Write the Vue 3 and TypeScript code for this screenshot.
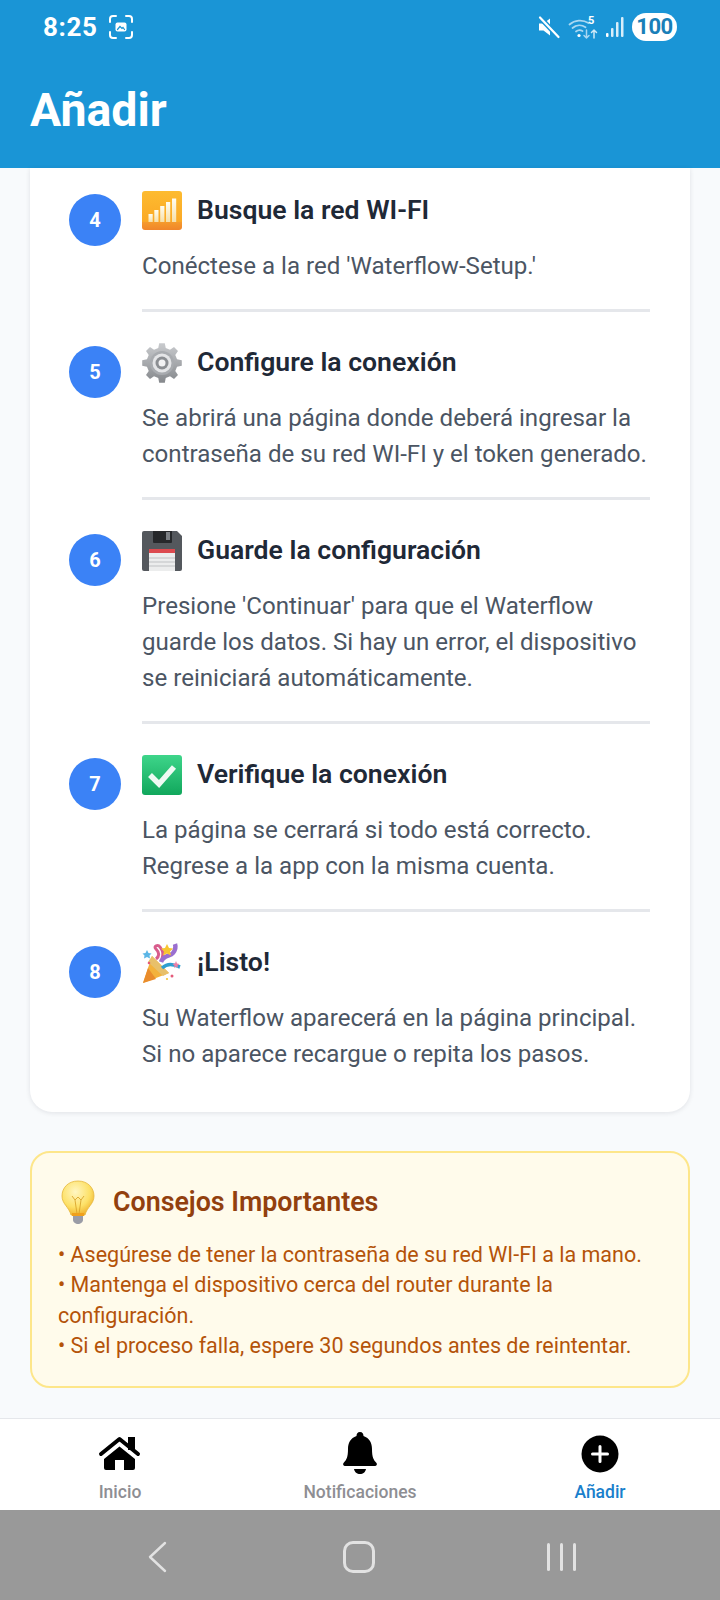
<template>
  <div class="phone">
    <header class="top">
      <div class="status-bar">
        <div class="status-left">
          <span class="clock">8:25</span>
          <svg class="shot-icon" width="26" height="26" viewBox="0 0 26 26" fill="none" stroke="#fff" stroke-width="2" stroke-linecap="round">
            <path d="M2 8V5a3 3 0 0 1 3-3h3M18 2h3a3 3 0 0 1 3 3v3M24 18v3a3 3 0 0 1-3 3h-3M8 24H5a3 3 0 0 1-3-3v-3" />
            <rect x="7.500" y="8.500" width="11" height="9" rx="2" fill="#fff" stroke="none" />
            <path d="M9.500 15.500l2.500-3 2 2 1-1 1.500 2" stroke="#1a95d6" stroke-width="1.200" />
          </svg>
        </div>
        <div class="status-right">
          <svg width="24" height="24" viewBox="0 0 24 24" fill="#fff">
            <path d="M2 8.500h4.500L13 3.500v17l-6.500-5H2z" />
            <path d="M3 2.500l18.500 19.500" stroke="#1a95d6" stroke-width="5" />
            <path d="M3 2.500l18.500 19.500" stroke="#fff" stroke-width="2.200" stroke-linecap="round" />
          </svg>
          <svg width="30" height="28" viewBox="0 0 30 28" fill="none" stroke="#a9d8f2" stroke-width="1.800" stroke-linecap="round">
            <path d="M1.500 11.500a16 16 0 0 1 19-1.500M4.500 15a11 11 0 0 1 13-.8M8 18.500a6 6 0 0 1 6.500-.5" />
            <circle cx="11" cy="22.500" r="1.600" fill="#fff" stroke="none" />
            <path d="M18.500 17v8m-2.500-2.500l2.500 2.500 2.500-2.500" stroke-width="1.500" />
            <path d="M26 25v-8m-2.500 2.500L26 17l2.500 2.500" stroke="#cfe9f8" stroke-width="1.500" />
            <text x="20" y="11" class="wifi-five">5</text>
          </svg>
          <svg width="20" height="24" viewBox="0 0 20 24" fill="#d8eefa">
            <rect x="1" y="18" width="2.500" height="4" rx="1" fill="#fff" />
            <rect x="6" y="13" width="2.500" height="9" rx="1" />
            <rect x="11" y="7" width="2.500" height="15" rx="1" />
            <rect x="16" y="2" width="2.500" height="20" rx="1" />
          </svg>
          <span class="battery">100</span>
        </div>
      </div>
      <h1 class="page-title">Añadir</h1>
    </header>

    <main class="content">
      <section class="steps-card">
        <div v-for="(step, i) in steps" :key="step.num" class="step">
          <div class="step-num">{{ step.num }}</div>
          <div class="step-body">
            <div class="step-head">
              <svg v-if="step.icon === 'signal'" class="emoji" viewBox="0 0 40 40">
                <defs>
                  <linearGradient id="sigBg" x1="0" y1="0" x2="0" y2="1">
                    <stop offset="0" stop-color="#fdbb30" />
                    <stop offset="0.78" stop-color="#fba925" />
                    <stop offset="0.8" stop-color="#f59a2c" />
                    <stop offset="1" stop-color="#f0852a" />
                  </linearGradient>
                  <linearGradient id="sigBar" x1="0" y1="0" x2="0" y2="1">
                    <stop offset="0" stop-color="#fffdf2" />
                    <stop offset="1" stop-color="#f6dfa8" />
                  </linearGradient>
                </defs>
                <rect width="40" height="39" rx="3" fill="url(#sigBg)" />
                <g fill="url(#sigBar)">
                  <rect x="6.500" y="23" width="4.200" height="8" />
                  <rect x="12.300" y="19" width="4.200" height="12" />
                  <rect x="18.200" y="15" width="4.200" height="16" />
                  <rect x="24" y="11" width="4.200" height="20" />
                  <rect x="30" y="7.500" width="4.200" height="23.500" />
                </g>
              </svg>
              <svg v-else-if="step.icon === 'gear'" class="emoji" viewBox="0 0 40 40">
                <defs>
                  <linearGradient id="gearBg" x1="0" y1="0" x2="0" y2="1">
                    <stop offset="0" stop-color="#c9cbce" />
                    <stop offset="1" stop-color="#85888c" />
                  </linearGradient>
                </defs>
                <path :d="gearPath" fill="url(#gearBg)" />
                <circle cx="20" cy="20" r="12" fill="#a8abaf" />
                <circle cx="20" cy="20" r="9.500" fill="#e4e5e7" />
                <circle cx="20" cy="20" r="6.500" fill="#8b8e92" />
                <circle cx="20" cy="20" r="3.500" fill="#f2f2f3" />
              </svg>
              <svg v-else-if="step.icon === 'floppy'" class="emoji" viewBox="0 0 40 40">
                <path d="M2 0h33l5 5v33a2 2 0 0 1-2 2H2a2 2 0 0 1-2-2V2a2 2 0 0 1 2-2z" fill="#54585d" />
                <path d="M11 0h19v11a1 1 0 0 1-1 1H12a1 1 0 0 1-1-1z" fill="#26282b" />
                <rect x="24" y="1" width="4" height="8" fill="#7c8085" />
                <rect x="7" y="18" width="26" height="22" fill="#eceded" />
                <rect x="7" y="18" width="26" height="4" fill="#dc4a4f" />
                <path d="M7 27h26M7 31h26M7 35h26" stroke="#bfc1c3" stroke-width="1" />
              </svg>
              <svg v-else-if="step.icon === 'check'" class="emoji" viewBox="0 0 40 40">
                <defs>
                  <linearGradient id="okBg" x1="0" y1="0" x2="0" y2="1">
                    <stop offset="0" stop-color="#3ed58a" />
                    <stop offset="1" stop-color="#11a75c" />
                  </linearGradient>
                </defs>
                <rect width="40" height="40" rx="3" fill="url(#okBg)" />
                <path d="M8 20l9 9 15-17" fill="none" stroke="#eefaf3" stroke-width="5.500" />
              </svg>
              <svg v-else-if="step.icon === 'party'" class="emoji" viewBox="0 0 40 40">
                <path d="M1 40l9-27 17 17z" fill="#f3b23c" />
                <path d="M1 40l5-15 8 11z" fill="#e98c2c" />
                <path d="M10 13l17 17-6 3-15-14z" fill="#e8c06a" />
                <path d="M14 16c4-3 3-7 0-10s2-5 4-2 4 5 2 12" fill="none" stroke="#d85c8c" stroke-width="3" />
                <path d="M19 19c3-8 9-5 12-9s3-6 2-9" fill="none" stroke="#9a6fd0" stroke-width="4.500" />
                <path d="M20 25c6-5 10-4 18-1" fill="none" stroke="#2f9fd0" stroke-width="3.500" />
                <path d="M25 1l2 4 4 .5-3 3 1 4-4-2-4 2 1-4-3-3 4-.5z" fill="#f7c531" />
                <path d="M5 7l1.500 3 3 .5-2 2 .5 3-3-1.500-3 1.500.5-3-2-2 3-.5z" fill="#5cb6e6" />
                <path d="M34 18l1 2.500 2.500.5-2 1.500.5 2.500-2-1.500-2 1.500.5-2.500-2-1.500 2.500-.5z" fill="#ee7fa6" />
                <circle cx="7" cy="20" r="1.300" fill="#e45a7a" />
                <circle cx="30" cy="33" r="1.500" fill="#e45a7a" />
                <circle cx="25" cy="36" r="1.100" fill="#f7c531" />
              </svg>
              <h3 class="step-title">{{ step.title }}</h3>
            </div>
            <p class="step-desc">
              <template v-for="(line, j) in step.lines" :key="j">
                {{ line }}<br v-if="j < step.lines.length - 1" />
              </template>
            </p>
            <div v-if="i < steps.length - 1" class="divider"></div>
          </div>
        </div>
      </section>

      <section class="tips">
        <div class="tips-head">
          <svg class="emoji bulb" viewBox="0 0 40 44">
            <defs>
              <radialGradient id="bulbBg" cx="0.42" cy="0.32" r="0.75">
                <stop offset="0" stop-color="#fff6c2" />
                <stop offset="0.6" stop-color="#fde168" />
                <stop offset="1" stop-color="#eeaa22" />
              </radialGradient>
            </defs>
            <path d="M20 1C10 1 4 8 4 16c0 8 7 11 9 19h14c2-8 9-11 9-19C36 8 30 1 20 1z" fill="url(#bulbBg)" stroke="#e4b63c" stroke-width=".8" />
            <path d="M14 16l3 4 3-3 3 3 3-4M17 20l2 14M23 20l-2 14" fill="none" stroke="#d9a52c" stroke-width=".9" />
            <rect x="14" y="33" width="12" height="3" fill="#f0a01c" />
            <path d="M15 36h10v4c0 2-2.500 4-5 4s-5-2-5-4z" fill="#9a9ca6" />
          </svg>
          <h3 class="tips-title">Consejos Importantes</h3>
        </div>
        <p class="tips-text">
          • Asegúrese de tener la contraseña de su red WI-FI a la mano.<br />
          • Mantenga el dispositivo cerca del router durante la configuración.<br />
          • Si el proceso falla, espere 30 segundos antes de reintentar.
        </p>
      </section>
    </main>

    <nav class="tabbar">
      <div v-for="tab in tabs" :key="tab.label" class="tab" :class="{ active: tab.active }">
        <svg v-if="tab.label === 'Inicio'" width="44" height="44" viewBox="0 0 44 44">
          <path d="M30 5h7v13h-7z" fill="#000" />
          <path d="M3 22L21.500 7 40 22" fill="none" stroke="#000" stroke-width="4" stroke-linecap="round" stroke-linejoin="round" />
          <path d="M21.500 14.500L37 27v9a2 2 0 0 1-2 2h-9V28h-9v10H8a2 2 0 0 1-2-2v-9z" fill="#000" />
        </svg>
        <svg v-else-if="tab.label === 'Notificaciones'" width="44" height="44" viewBox="0 0 44 44">
          <path d="M22 0c2.500 0 3.500 2 3.500 4 6 2 8.500 7 8.500 13 0 8 1.500 11 4.500 14 1 1.500 0 3-1.500 3H7c-1.500 0-2.500-1.500-1.500-3 3-3 4.500-6 4.500-14 0-6 2.500-11 8.500-13C18.500 2 19.500 0 22 0z" fill="#000" />
          <path d="M16 37h12c-.5 3-3 5-6 5s-5.500-2-6-5z" fill="#000" />
        </svg>
        <svg v-else width="44" height="44" viewBox="0 0 44 44">
          <circle cx="22" cy="22" r="18.500" fill="#000" />
          <path d="M22 14.500v15M14.500 22h15" stroke="#fff" stroke-width="3" stroke-linecap="round" />
        </svg>
        <span class="tab-label">{{ tab.label }}</span>
      </div>
    </nav>

    <div class="sys-nav">
      <svg width="24" height="34" viewBox="0 0 24 34" fill="none" stroke="#e2e2e2" stroke-width="2.400" stroke-linecap="round" stroke-linejoin="round">
        <path d="M20 3L5 17l15 14" />
      </svg>
      <div class="sys-home"></div>
      <div class="sys-recent"><i></i><i></i><i></i></div>
    </div>
  </div>
</template>

<script setup lang="ts">
type Step = { num: number; icon: string; title: string; lines: string[] }

const steps: Step[] = [
  { num: 4, icon: 'signal', title: 'Busque la red WI-FI', lines: ["Conéctese a la red 'Waterflow-Setup.'"] },
  {
    num: 5,
    icon: 'gear',
    title: 'Configure la conexión',
    lines: ['Se abrirá una página donde deberá ingresar la', 'contraseña de su red WI-FI y el token generado.'],
  },
  {
    num: 6,
    icon: 'floppy',
    title: 'Guarde la configuración',
    lines: ["Presione 'Continuar' para que el Waterflow", 'guarde los datos. Si hay un error, el dispositivo', 'se reiniciará automáticamente.'],
  },
  {
    num: 7,
    icon: 'check',
    title: 'Verifique la conexión',
    lines: ['La página se cerrará si todo está correcto.', 'Regrese a la app con la misma cuenta.'],
  },
  {
    num: 8,
    icon: 'party',
    title: '¡Listo!',
    lines: ['Su Waterflow aparecerá en la página principal.', 'Si no aparece recargue o repita los pasos.'],
  },
]

const tabs = [
  { label: 'Inicio', active: false },
  { label: 'Notificaciones', active: false },
  { label: 'Añadir', active: true },
]

// 8 toothed gear outline, same shape as the emoji
const gearPath = (() => {
  const teeth = 8
  const pts: string[] = []
  for (let i = 0; i < teeth; i++) {
    const a = (i / teeth) * Math.PI * 2 - Math.PI / 2
    const w = Math.PI / teeth
    const spots: [number, number][] = [
      [15.5, a - w * 0.62],
      [20, a - w * 0.36],
      [20, a + w * 0.36],
      [15.5, a + w * 0.62],
    ]
    for (const [r, t] of spots) {
      pts.push(`${(20 + r * Math.cos(t)).toFixed(2)} ${(20 + r * Math.sin(t)).toFixed(2)}`)
    }
  }
  return `M${pts.join('L')}Z`
})()
</script>

<style>
html,
body {
  margin: 0;
  background: #f8fafc;
}
</style>

<style scoped>
.phone {
  width: 720px;
  height: 1600px;
  display: flex;
  flex-direction: column;
  overflow: hidden;
  background: #f8fafc;
  font-family: Roboto, "Liberation Sans", sans-serif;
}

.top {
  height: 168px;
  background: #1a95d6;
  color: #fff;
  flex-shrink: 0;
}

.status-bar {
  height: 54px;
  padding: 0 43px;
  display: flex;
  align-items: center;
  justify-content: space-between;
}

.status-left {
  display: flex;
  align-items: center;
  gap: 11px;
}

.clock {
  font-size: 26px;
  font-weight: 700;
  letter-spacing: 0.6px;
}

.status-right {
  display: flex;
  align-items: center;
  gap: 7px;
}

.wifi-five {
  font-family: Roboto, sans-serif;
  font-size: 11px;
  font-weight: 700;
  fill: #fff;
  stroke: none;
}

.battery {
  width: 45px;
  height: 28px;
  border-radius: 14px;
  background: #fff;
  color: #1a7fb8;
  font-size: 22px;
  font-weight: 700;
  line-height: 28px;
  text-align: center;
  letter-spacing: -0.5px;
}

.page-title {
  margin: 30px 0 0 30px;
  font-size: 46.4px;
  font-weight: 700;
  line-height: 52px;
}

.content {
  flex: 1;
  padding: 0 30px;
  min-height: 0;
}

.steps-card {
  background: #fff;
  border-radius: 0 0 22px 22px;
  padding: 26px 40px 40px 39px;
  box-shadow: 0 1px 5px rgba(15, 23, 42, 0.1);
}

.step {
  display: flex;
  gap: 21px;
}

.step-num {
  width: 52px;
  height: 52px;
  flex-shrink: 0;
  border-radius: 50%;
  background: #3b82f6;
  color: #fff;
  font-size: 20px;
  font-weight: 700;
  display: flex;
  align-items: center;
  justify-content: center;
}

.step-body {
  flex: 1;
  min-width: 0;
  margin-top: -3px;
}

.step-head {
  height: 40px;
  display: flex;
  align-items: center;
  gap: 15px;
}

.emoji {
  width: 40px;
  height: 40px;
  flex-shrink: 0;
}

.step-title {
  margin: 0 0 4px;
  font-size: 26.6px;
  font-weight: 600;
  color: #1f2937;
}

.step-desc {
  margin: 17px 0 0;
  font-size: 24.1px;
  line-height: 36px;
  color: #4b5563;
}

.divider {
  height: 3px;
  margin-top: 25px;
  margin-bottom: 34px;
  background: #e5e7eb;
}

.tips {
  margin-top: 39px;
  padding: 26px 26px 25px;
  background: #fffbeb;
  border: 2px solid #fde68a;
  border-radius: 20px;
}

.tips-head {
  height: 46px;
  display: flex;
  align-items: center;
  gap: 15px;
  margin-bottom: 15px;
}

.bulb {
  height: 44px;
}

.tips-title {
  margin: 0;
  font-size: 26.8px;
  font-weight: 600;
  color: #92400e;
}

.tips-text {
  margin: 0;
  font-size: 21.5px;
  line-height: 30.3px;
  color: #b45309;
}

.tabbar {
  height: 92px;
  flex-shrink: 0;
  box-sizing: border-box;
  padding-top: 13px;
  background: #fff;
  border-top: 1px solid #e5e7eb;
  display: grid;
  grid-template-columns: repeat(3, 1fr);
}

.tab {
  display: flex;
  flex-direction: column;
  align-items: center;
  gap: 6px;
}

.tab-label {
  font-size: 17.5px;
  font-weight: 500;
  color: #8e8e93;
}

.tab.active .tab-label {
  color: #1a7fcc;
}

.sys-nav {
  height: 90px;
  flex-shrink: 0;
  background: #999;
  display: grid;
  grid-template-columns: repeat(3, 202px);
  align-items: center;
  justify-items: center;
  padding: 4px 0 0 56px;
  box-sizing: border-box;
}

.sys-home {
  width: 26px;
  height: 26px;
  border: 3px solid #e2e2e2;
  border-radius: 10px;
}

.sys-recent {
  display: flex;
  gap: 10px;
}

.sys-recent i {
  display: block;
  width: 3px;
  height: 28px;
  border-radius: 2px;
  background: #e2e2e2;
}
</style>
